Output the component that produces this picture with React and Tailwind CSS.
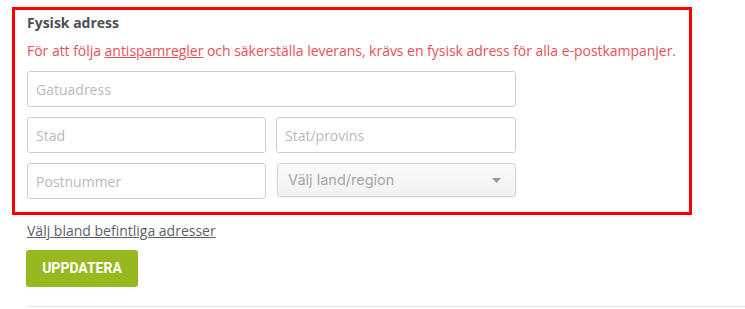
import React from "react";

const os = { fontFamily: '"Open Sans", "Liberation Sans", sans-serif' };

function Field({ placeholder, className = "" }) {
  return (
    <div
      className={`h-[36px] border border-[#cfcfcf] rounded-[3px] bg-white flex items-center pl-[8px] text-[14px] text-[#b9b9b9] ${className}`}
      style={os}
    >
      {placeholder}
    </div>
  );
}

export default function App() {
  return (
    <div className="w-[745px] h-[309px] bg-white overflow-hidden" style={os}>
      <div className="ml-[12px] mt-[7px] w-[680px] h-[208px] border-[3px] border-[#ff0000] pl-[12px] pt-[4px]">
        <div className="text-[14px] leading-[18px] font-bold text-[#4b4f56]">Fysisk adress</div>
        <div className="mt-[10px] text-[14px] leading-[18px] text-[#e8505b] whitespace-nowrap tracking-[-0.03px]">
          För att följa <span className="underline">antispamregler</span> och säkerställa leverans, krävs en fysisk adress för alla e-postkampanjer.
        </div>
        <Field placeholder="Gatuadress" className="mt-[11px] w-[489px]" />
        <div className="mt-[10px] flex gap-[10px]">
          <Field placeholder="Stad" className="w-[239px]" />
          <Field placeholder="Stat/provins" className="w-[240px]" />
        </div>
        <div className="mt-[10px] flex gap-[11px] items-start">
          <Field placeholder="Postnummer" className="w-[239px]" />
          <div className="w-[239px] h-[34px] border border-[#d2d2d2] rounded-[4px] bg-gradient-to-b from-[#fbfbfb] to-[#f1f1f1] shadow-[0_1px_2px_rgba(0,0,0,0.08)] flex items-center justify-between pl-[10px] pr-[14px]">
            <span className="text-[14.5px] text-[#a8a8a8]" style={{ fontFamily: 'Inter, "Noto Sans", sans-serif' }}>
              Välj land/region
            </span>
            <svg width="9" height="5" viewBox="0 0 9 5">
              <path d="M0 0 L9 0 L4.5 5 Z" fill="#999999" />
            </svg>
          </div>
        </div>
      </div>
      <div className="ml-[27px] mt-[7px] text-[14px] leading-[18px] text-[#5b5f66] underline">
        Välj bland befintliga adresser
      </div>
      <button
        className="ml-[26px] mt-[10px] w-[112px] h-[37px] rounded-[3px] bg-[#97b81e] text-white text-[14px] font-bold flex items-center justify-center"
        style={{ fontFamily: 'Roboto, "Liberation Sans", sans-serif' }}
      >
        UPPDATERA
      </button>
      <div className="ml-[27px] mt-[19px] h-px bg-[#e3e3e3]" />
    </div>
  );
}
